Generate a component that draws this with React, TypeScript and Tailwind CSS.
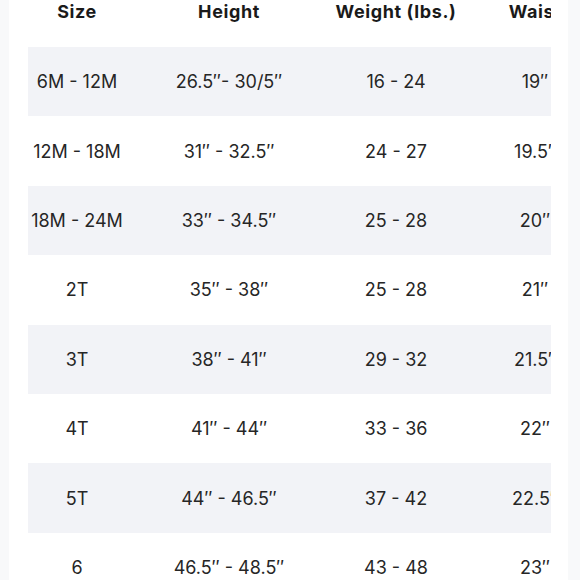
import React from "react";

const rows: [string, string, string, string][] = [
  ["6M - 12M", "26.5″- 30/5″", "16 - 24", "19″"],
  ["12M - 18M", "31″ - 32.5″", "24 - 27", "19.5″"],
  ["18M - 24M", "33″ - 34.5″", "25 - 28", "20″"],
  ["2T", "35″ - 38″", "25 - 28", "21″"],
  ["3T", "38″ - 41″", "29 - 32", "21.5″"],
  ["4T", "41″ - 44″", "33 - 36", "22″"],
  ["5T", "44″ - 46.5″", "37 - 42", "22.5″"],
  ["6", "46.5″ - 48.5″", "43 - 48", "23″"],
];

const cols = "grid grid-cols-[98px_206px_128px_150px] w-[582px]";

export default function App() {
  return (
    <div
      className="w-[580px] h-[580px] overflow-hidden bg-white flex text-[#262626]"
      style={{ fontFamily: "Inter, 'Open Sans', sans-serif" }}
    >
      <div className="w-[9px] shrink-0 bg-[#f8f9fa]" />
      <div className="w-[19px] shrink-0" />
      <div className="w-[523px] shrink-0 overflow-hidden">
        <div className={`${cols} h-[47px] items-start pt-[1px]`}>
          {["Size", "Height", "Weight (lbs.)", "Waist"].map((h) => (
            <div
              key={h}
              className="text-center text-[18px] font-bold tracking-[0.6px] whitespace-nowrap leading-[22px] text-[#1a1a1a]"
            >
              {h}
            </div>
          ))}
        </div>
        {rows.map((r, i) => (
          <div
            key={i}
            className={`${cols} h-[69.4px] items-center ${i % 2 === 0 ? "bg-[#f2f3f7]" : "bg-white"}`}
          >
            {r.map((c, j) => (
              <div key={j} className="text-center text-[18px] font-normal whitespace-nowrap">
                {c}
              </div>
            ))}
          </div>
        ))}
      </div>
      <div className="w-[17px] shrink-0" />
      <div className="flex-1 bg-[#f8f9fa]" />
    </div>
  );
}
